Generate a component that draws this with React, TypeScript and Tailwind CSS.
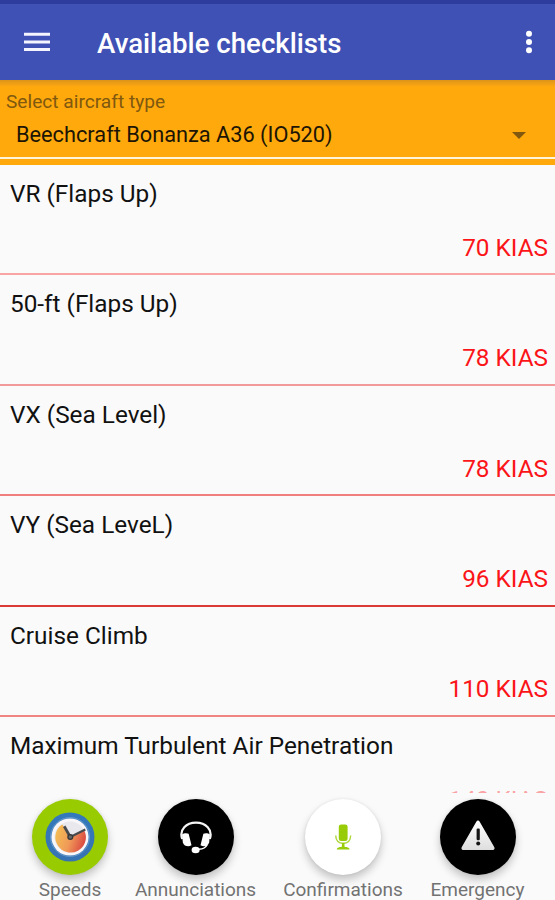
import type { ReactNode } from "react";

interface Speed {
  name: string;
  value: string;
  divider: string;
  faded?: boolean;
}

const speeds: Speed[] = [
  { name: "VR (Flaps Up)", value: "70 KIAS", divider: "bg-[#f9a5a5]" },
  { name: "50-ft (Flaps Up)", value: "78 KIAS", divider: "bg-[#f29a9a]" },
  { name: "VX (Sea Level)", value: "78 KIAS", divider: "bg-[#ee7f7c]" },
  { name: "VY (Sea LeveL)", value: "96 KIAS", divider: "bg-[#dc3a35]" },
  { name: "Cruise Climb", value: "110 KIAS", divider: "bg-[#f08482]" },
  { name: "Maximum Turbulent Air Penetration", value: "140 KIAS", divider: "bg-[#f08482]", faded: true },
];

const SpeedRow = ({ name, value, divider, faded }: Speed) => (
  <li className="flex h-[110.4px] shrink-0 flex-col">
    <div className="flex flex-1 flex-col justify-between pt-[13px] pr-[7px] pb-[9.6px] pl-[10px] text-[24.35px] leading-8">
      <span className="whitespace-nowrap text-[#111]">{name}</span>
      <span className={`self-end whitespace-nowrap ${faded ? "text-[#fb1418]/40" : "text-[#fb1418]"}`}>{value}</span>
    </div>
    <div className={`h-[2px] ${divider}`} />
  </li>
);

const ClockIcon = () => (
  <svg width="50" height="50" viewBox="0 0 50 50">
    <defs>
      <linearGradient id="dial" x1="0" x2="1" y1="0.3" y2="0.6">
        <stop offset="0" stopColor="#f5bd52" />
        <stop offset="0.5" stopColor="#f09a58" />
        <stop offset="1" stopColor="#da4740" />
      </linearGradient>
      <linearGradient id="rim" x1="0" x2="0" y1="0" y2="1">
        <stop offset="0" stopColor="#3279bb" />
        <stop offset="1" stopColor="#3773b3" />
      </linearGradient>
    </defs>
    <circle cx="25" cy="25" r="24.5" fill="url(#rim)" />
    <circle cx="25" cy="25" r="19.5" fill="none" stroke="#6297cc" strokeWidth="1" />
    <circle cx="25" cy="25" r="18.6" fill="#f8f6f8" />
    <circle cx="25" cy="25" r="15.5" fill="#e9e8ec" />
    <path d="M25 25 17.3 12.4A15.3 15.3 0 1 0 39.3 18.4Z" fill="url(#dial)" />
    <path d="M25.3 25 19.2 14.3" stroke="#484b4e" strokeWidth="2.8" />
    <path d="M25.3 25 40.3 17.4" stroke="#484b4e" strokeWidth="2.2" />
    <circle cx="25.3" cy="25" r="2.4" fill="#666" stroke="#343638" strokeWidth="1.3" />
  </svg>
);

const HeadsetIcon = () => (
  <svg width="34" height="34" viewBox="0 0 34 34" fill="none">
    <path d="M3.2 19C-.2 9.5 7.5 2.6 17 2.6S34.2 9.5 30.8 19" stroke="#f5f5f5" strokeWidth="2.2" />
    <path d="M3 14.5c1.6-1.4 4.7-1.8 6.6-.8l2.9 11.5c-3 2.2-7.4 1-8.6-2.5Z" fill="#fff" />
    <path d="M31 14.5c-1.6-1.4-4.7-1.8-6.6-.8l-2.9 11.5c3 2.2 7.4 1 8.6-2.5Z" fill="#fff" />
    <path d="M28.3 24.5c-1.7 3.5-4 4.6-8.3 4.7" stroke="#fff" strokeWidth="1.5" />
    <ellipse cx="16.6" cy="30" rx="4" ry="3.3" fill="#fff" />
  </svg>
);

const MicIcon = () => (
  <svg width="18" height="26" viewBox="0 0 18 26" fill="none">
    <rect x="4.8" y="0.5" width="8.8" height="16.5" rx="2.3" fill="#98cc08" />
    <path d="M1.7 11.5c.2 5 3 7.8 7.5 7.8s7.3-2.8 7.5-7.8" stroke="#aed63c" strokeWidth="1.4" />
    <path d="M9.2 19v4" stroke="#98cc08" strokeWidth="2.6" />
    <path d="M2.8 25.4c0-1.8 3-2.6 6.4-2.6s6.4.8 6.4 2.6Z" fill="#98cc08" />
  </svg>
);

const WarningIcon = () => (
  <svg width="34" height="31" viewBox="0 0 34 31" className="-mt-[3px]">
    <defs>
      <linearGradient id="warn" x1="0" x2="0" y1="0" y2="1">
        <stop offset="0" stopColor="#fff" />
        <stop offset="1" stopColor="#dedede" />
      </linearGradient>
    </defs>
    <path
      d="M15.3 1.7c.8-1.5 2.6-1.5 3.4 0l14.5 25.2c.9 1.7.1 3.1-1.8 3.1H2.6C.7 30-.1 28.6.8 26.9Z"
      fill="url(#warn)"
    />
    <rect x="15.6" y="8.5" width="3.2" height="11.7" rx="1.3" fill="#151515" />
    <circle cx="17.2" cy="23.6" r="2" fill="#151515" />
  </svg>
);

interface ActionProps {
  label: string;
  width: string;
  color: string;
  children: ReactNode;
}

/** Round floating button with its caption */
const Action = ({ label, width, color, children }: ActionProps) => (
  <div className={`flex flex-col items-center ${width}`}>
    <button
      className={`flex size-[76px] shrink-0 items-center justify-center rounded-full shadow-[0_5px_8px_rgba(0,0,0,0.22),0_0_3px_rgba(0,0,0,0.08)] ${color}`}
    >
      {children}
    </button>
    <span className="mt-[3px] text-[19px] leading-6 whitespace-nowrap text-[#727272]">{label}</span>
  </div>
);

const App = () => {
  return (
    <div className="flex h-[900px] w-[555px] flex-col overflow-hidden bg-[#fafafa] font-['Roboto',sans-serif]">
      <div className="h-1 shrink-0 bg-[#2e3d9d]" />
      <header className="flex h-[76px] shrink-0 items-center bg-[#3f51b5] pr-[22px] pl-[23.5px] text-white">
        <svg width="26" height="20" viewBox="0 0 26 20" stroke="#f4f4ff" strokeWidth="3">
          <path d="M0 2.2h26M0 10h26M0 17.6h26" />
        </svg>
        <h1 className="ml-[47.5px] flex-1 pt-[3px] text-[27.65px] leading-8 font-medium">Available checklists</h1>
        <svg width="8" height="24" viewBox="0 0 8 24" fill="#fff">
          <circle cx="4" cy="3.8" r="3" />
          <circle cx="4" cy="12" r="3" />
          <circle cx="4" cy="20.2" r="3" />
        </svg>
      </header>

      <section className="flex h-[85px] shrink-0 flex-col bg-linear-to-b from-[#dc9419] to-[#ffa90d] to-[7px] pt-[9px]">
        <label className="pt-[1px] pl-[6px] text-[19.15px] leading-6 text-[#80580f]">Select aircraft type</label>
        <div className="flex h-[43px] items-center justify-between pr-[29px] pl-4 text-[21.75px] text-[#1c1505]">
          <span>Beechcraft Bonanza A36 (IO520)</span>
          <svg width="14" height="7" viewBox="0 0 14 7" fill="#80580f">
            <path d="M0 0h14L7 7Z" />
          </svg>
        </div>
        <div className="h-[2px] bg-[#fff4dc]" />
      </section>

      <ul className="flex min-h-0 flex-1 flex-col overflow-hidden">
        {speeds.map((speed) => (
          <SpeedRow key={speed.name} {...speed} />
        ))}
      </ul>

      <nav className="flex h-[107px] shrink-0 gap-[27px] pt-[5.5px] pl-8">
        <Action label="Speeds" width="w-[76px]" color="bg-[#98cb00]">
          <ClockIcon />
        </Action>
        <Action label="Annunciations" width="w-[121px]" color="bg-black">
          <HeadsetIcon />
        </Action>
        <Action label="Confirmations" width="w-[120px]" color="bg-white">
          <MicIcon />
        </Action>
        <Action label="Emergency" width="w-[95px]" color="bg-black">
          <WarningIcon />
        </Action>
      </nav>
    </div>
  );
};

export default App;
